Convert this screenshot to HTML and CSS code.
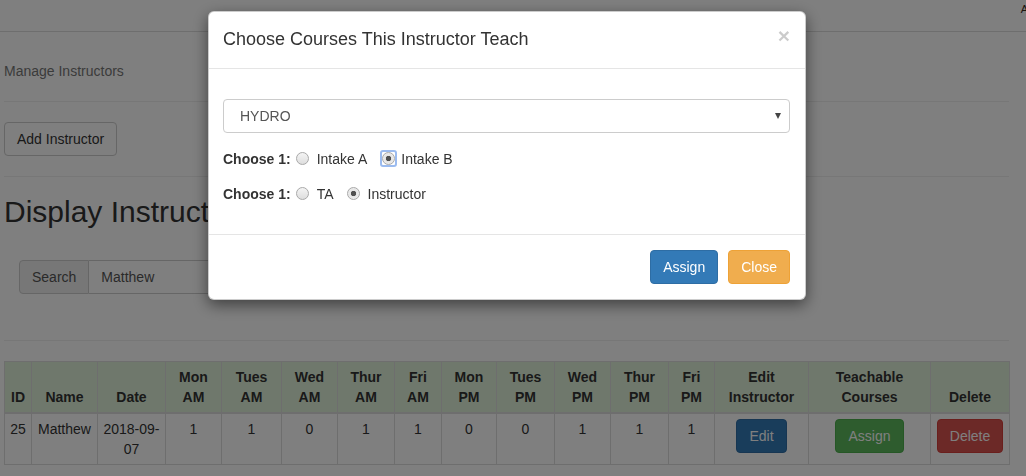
FILE: index.html
```html
<!DOCTYPE html>
<html lang="en">
<head>
<meta charset="utf-8">
<title>Manage Instructors</title>
<link rel="stylesheet" href="styles.css">
</head>
<body>
<div class="topbar"><span class="topbar-item">Admin</span></div>
<main class="page">
  <div class="crumb">Manage Instructors</div>
  <hr class="rule">
  <button class="btn btn-default" type="button">Add Instructor</button>
  <hr class="rule">
  <h2 class="page-title">Display Instructors</h2>
  <div class="search-row">
    <span class="addon">Search</span>
    <input class="search-input" type="text" value="Matthew">
  </div>
  <hr class="rule">
  <table class="grid">
    <colgroup>
      <col style="width:27px"><col style="width:66px"><col style="width:68px">
      <col style="width:56px"><col style="width:60px"><col style="width:56px"><col style="width:57px"><col style="width:47px">
      <col style="width:55px"><col style="width:58px"><col style="width:56px"><col style="width:58px"><col style="width:46px">
      <col style="width:94px"><col style="width:122px"><col style="width:79px">
    </colgroup>
    <thead>
      <tr>
        <th>ID</th><th>Name</th><th>Date</th>
        <th>Mon AM</th><th>Tues AM</th><th>Wed AM</th><th>Thur AM</th><th>Fri AM</th>
        <th>Mon PM</th><th>Tues PM</th><th>Wed PM</th><th>Thur PM</th><th>Fri PM</th>
        <th>Edit Instructor</th><th>Teachable Courses</th><th>Delete</th>
      </tr>
    </thead>
    <tbody>
      <tr>
        <td>25</td><td>Matthew</td><td>2018-09-07</td>
        <td>1</td><td>1</td><td>0</td><td>1</td><td>1</td>
        <td>0</td><td>0</td><td>1</td><td>1</td><td>1</td>
        <td><button class="btn btn-primary" type="button">Edit</button></td>
        <td><button class="btn btn-success" type="button">Assign</button></td>
        <td><button class="btn btn-danger" type="button">Delete</button></td>
      </tr>
    </tbody>
  </table>
</main>

<div class="backdrop"></div>

<div class="modal" role="dialog">
  <div class="modal-header">
    <h4 class="modal-title">Choose Courses This Instructor Teach</h4>
    <button class="close" type="button">&times;</button>
  </div>
  <div class="modal-body">
    <div class="select-wrap">
      <select class="course-select">
        <option>HYDRO</option>
      </select>
    </div>
    <div class="choice-row">
      <b class="choice-label">Choose 1:</b>
      <label class="opt"><input class="radio" type="radio" name="intake">Intake A</label>
      <label class="opt"><span class="ring"><input class="radio" type="radio" name="intake" checked></span>Intake B</label>
    </div>
    <div class="choice-row">
      <b class="choice-label">Choose 1:</b>
      <label class="opt"><input class="radio" type="radio" name="role">TA</label>
      <label class="opt"><input class="radio" type="radio" name="role" checked>Instructor</label>
    </div>
  </div>
  <div class="modal-footer">
    <button class="btn btn-primary" type="button">Assign</button>
    <button class="btn btn-warning" type="button">Close</button>
  </div>
</div>
</body>
</html>
```
FILE: styles.css
```css
html, body {
  margin: 0;
  padding: 0;
  overflow: hidden;
}
body {
  font-family: "Liberation Sans", Arial, sans-serif;
  font-size: 14px;
  line-height: 20px;
  color: #333;
  background: #fff;
}

.topbar {
  height: 31px;
  border-bottom: 1px solid #ddd;
  display: flex;
  justify-content: flex-end;
  overflow: hidden;
}
.topbar-item {
  font-size: 11px;
  line-height: 16px;
  padding-top: 1px;
  margin-right: -26px;
  color: #3a2a1a;
}

.page {
  padding: 0 17px 0 4px;
}
.crumb {
  margin-top: 29px;
  color: #777;
}
.rule {
  margin: 20px 0;
  border: 0;
  border-top: 1px solid #eee;
  height: 0;
}
.page-title {
  margin: 20px 0 0;
  font-size: 30px;
  font-weight: normal;
  line-height: 29px;
}

.btn {
  display: inline-block;
  font-family: inherit;
  font-size: 14px;
  line-height: 20px;
  padding: 6px 12px;
  border: 1px solid transparent;
  border-radius: 4px;
  margin: 0;
  cursor: pointer;
  white-space: nowrap;
}
.btn-default { color: #333; background: #fff; border-color: #ccc; }
.btn-primary { color: #fff; background: #337ab7; border-color: #2e6da4; }
.btn-success { color: #fff; background: #5cb85c; border-color: #4cae4c; }
.btn-danger  { color: #fff; background: #d9534f; border-color: #d43f3a; }
.btn-warning { color: #fff; background: #f0ad4e; border-color: #eea236; }

.search-row {
  display: flex;
  width: 400px;
  margin: 34px 15px 46px;
}
.addon {
  padding: 6px 12px;
  line-height: 20px;
  background: #eee;
  border: 1px solid #ccc;
  border-radius: 4px 0 0 4px;
  color: #555;
}
.search-input {
  flex: 1;
  font-family: inherit;
  font-size: 14px;
  line-height: 20px;
  height: 34px;
  box-sizing: border-box;
  padding: 6px 12px;
  border: 1px solid #ccc;
  border-left: 0;
  border-radius: 0 4px 4px 0;
  color: #555;
  margin: 0;
}

.grid {
  width: 100%;
  border-collapse: collapse;
  table-layout: fixed;
  border: 1px solid #ddd;
}
.grid th, .grid td {
  border: 1px solid #ddd;
  padding: 5px;
  line-height: 20px;
  text-align: center;
}
.grid thead th {
  vertical-align: bottom;
  border-bottom-width: 2px;
  background: #dff0d8;
  font-weight: bold;
}
.grid td {
  vertical-align: top;
}

.backdrop {
  position: fixed;
  inset: 0;
  background: rgba(0, 0, 0, 0.5);
}

.modal {
  position: fixed;
  top: 11px;
  left: 208px;
  width: 598px;
  box-sizing: border-box;
  background: #fff;
  border: 1px solid rgba(0, 0, 0, 0.2);
  border-radius: 6px;
  box-shadow: 0 5px 15px rgba(0, 0, 0, 0.5);
}
.modal-header {
  display: flex;
  justify-content: space-between;
  align-items: flex-start;
  padding: 15px 15px 15px 14px;
  border-bottom: 1px solid #e5e5e5;
}
.modal-title {
  margin: 0;
  font-size: 18px;
  font-weight: normal;
  line-height: 25.7px;
  color: #333;
}
.close {
  margin-top: -2px;
  padding: 0;
  background: none;
  border: 0;
  font-family: inherit;
  font-size: 21px;
  font-weight: bold;
  line-height: 1;
  color: #000;
  opacity: 0.2;
}
.modal-body {
  padding: 15px 15px 15px 14px;
}
.select-wrap {
  position: relative;
  margin-top: 15px;
}
.select-wrap::after {
  content: "";
  position: absolute;
  right: 9px;
  top: 14px;
  border-left: 3.5px solid transparent;
  border-right: 3.5px solid transparent;
  border-top: 6px solid #444;
}
.course-select {
  display: block;
  width: 100%;
  height: 34px;
  box-sizing: border-box;
  padding: 6px 12px 6px 16px;
  font-family: inherit;
  font-size: 14px;
  line-height: 20px;
  color: #555;
  background: #fff;
  border: 1px solid #ccc;
  border-radius: 4px;
  -webkit-appearance: none;
  appearance: none;
  margin: 0;
}
.choice-row {
  display: flex;
  align-items: center;
  height: 20px;
  margin-top: 16px;
}
.choice-row + .choice-row {
  margin-top: 15px;
  margin-bottom: 15px;
}
.choice-label {
  font-weight: bold;
}
.opt {
  display: inline-flex;
  align-items: center;
  margin-left: 13px;
  color: #333;
}
.choice-label + .opt {
  margin-left: 5px;
}
.radio {
  -webkit-appearance: none;
  appearance: none;
  width: 13px;
  height: 13px;
  margin: 0 8px 0 0;
  box-sizing: border-box;
  border: 1px solid #a9a9a9;
  border-radius: 50%;
  background: linear-gradient(#f4f4f4, #dedede);
}
.radio:checked {
  background: radial-gradient(circle, #505050 0, #505050 2.4px, #e4e4e4 3px, #f2f2f2 100%);
}
.ring {
  display: inline-flex;
  border: 2px solid #9bbbef;
  border-radius: 3px;
  margin-right: 4px;
}
.ring .radio {
  margin: 0;
}
.modal-footer {
  display: flex;
  justify-content: flex-end;
  gap: 10px;
  padding: 15px;
  border-top: 1px solid #e5e5e5;
}
```
